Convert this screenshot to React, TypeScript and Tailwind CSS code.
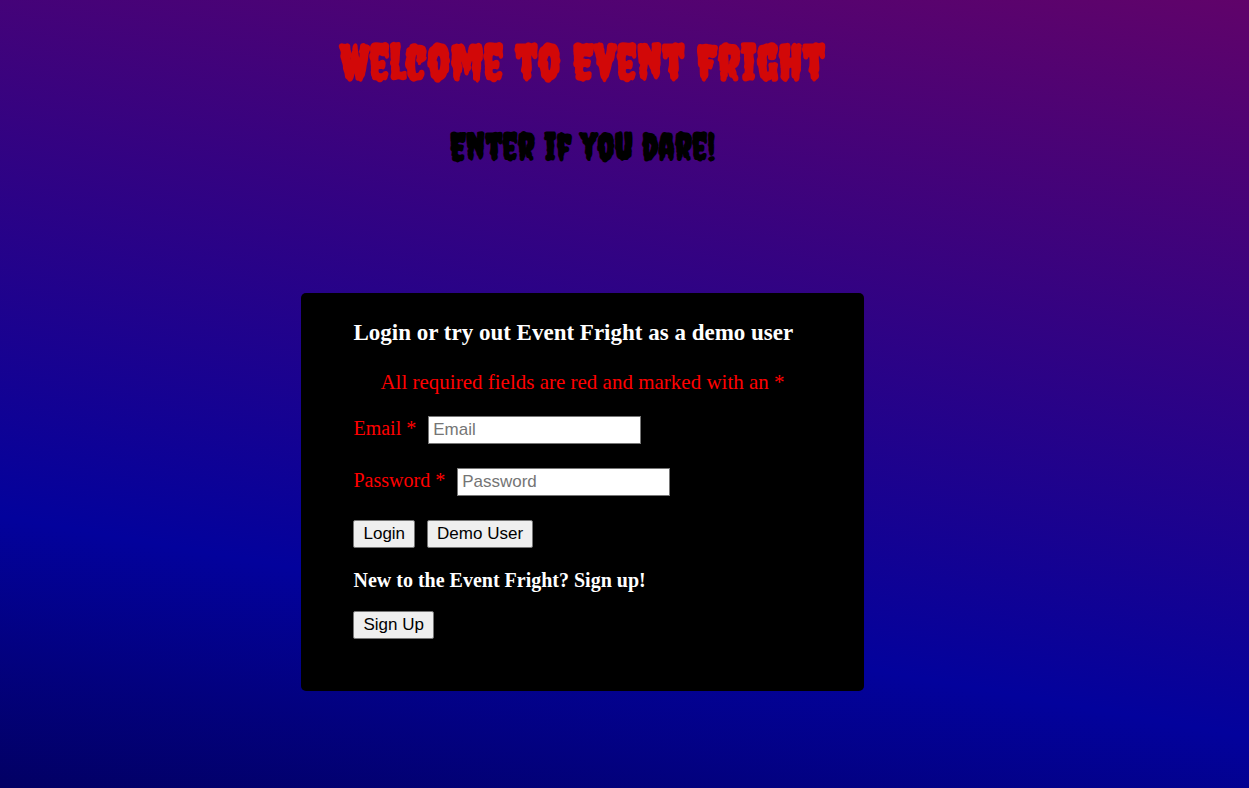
import type { ButtonHTMLAttributes, InputHTMLAttributes } from 'react';

function Field({ label, id, ...rest }: { label: string; id: string } & InputHTMLAttributes<HTMLInputElement>) {
  return (
    <div className="flex items-center gap-3">
      <label htmlFor={id} className="pb-1 text-[20px] leading-6 text-[#ff0000]">
        {label} *
      </label>
      <input
        id={id}
        placeholder={label}
        className="h-7 w-[213px] border border-[#767676] bg-white px-1 font-['Liberation_Sans',Arial,sans-serif] text-[17px] text-black placeholder:text-[#757575]"
        {...rest}
      />
    </div>
  );
}

function Button(props: ButtonHTMLAttributes<HTMLButtonElement>) {
  return (
    <button
      className="h-7 rounded-[2px] border border-[#767676] bg-[#efefef] px-[9px] font-['Liberation_Sans',Arial,sans-serif] text-[17px] leading-6 text-black"
      {...props}
    />
  );
}

export default function App() {
  return (
    <main className="flex min-h-screen flex-col items-center bg-[linear-gradient(10deg,#020064,#03029c_27%,#60036a)] pr-[84px] pb-24 font-['Liberation_Serif','Times_New_Roman',serif]">
      <header className="pt-8 text-center font-['Creepster',fantasy] font-bold">
        <h1 className="text-[50px] leading-[60px] text-[#d20808]">Welcome to Event Fright</h1>
        <h2 className="mt-8 text-[38px] leading-[44px] text-black">Enter if you dare!</h2>
      </header>

      <section className="mt-[125px] w-[45vw] min-w-[560px] rounded-[5px] bg-black px-13 pt-6 pb-13">
        <h3 className="text-[23px] leading-8 font-bold text-white">Login or try out Event Fright as a demo user</h3>
        <p className="mt-5 text-center text-[21px] leading-[26px] text-[#ff0000]">
          All required fields are red and marked with an *
        </p>
        <form className="mt-[21px] flex flex-col gap-6" onSubmit={(e) => e.preventDefault()}>
          <Field id="email" label="Email" type="email" />
          <Field id="password" label="Password" type="password" />
          <div className="flex gap-3">
            <Button type="submit">Login</Button>
            <Button type="button">Demo User</Button>
          </div>
        </form>
        <h4 className="mt-[18px] text-[20px] leading-7 font-bold text-white">New to the Event Fright? Sign up!</h4>
        <div className="mt-[17px] flex">
          <Button type="button">Sign Up</Button>
        </div>
      </section>
    </main>
  );
}
